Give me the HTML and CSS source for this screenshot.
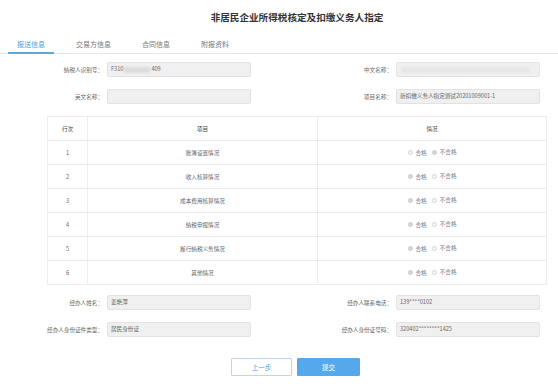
FILE: index.html
```html
<!DOCTYPE html>
<html lang="zh-CN">
<head>
<meta charset="utf-8">
<link rel="stylesheet" href="styles.css">
</head>
<body>
<div class="page">
  <h1 class="title">非居民企业所得税核定及扣缴义务人指定</h1>
  <div class="tabs">
    <div class="tab active">报送信息</div>
    <div class="tab">交易方信息</div>
    <div class="tab">合同信息</div>
    <div class="tab">附报资料</div>
  </div>
  <div class="content">
    <div class="form-grid top-form">
      <div class="field"><span class="label">纳税人识别号：</span><div class="input">F310<span class="mask mask-short"></span>409</div></div>
      <div class="field"><span class="label">中文名称：</span><div class="input"><span class="mask mask-long"></span></div></div>
      <div class="field"><span class="label">英文名称：</span><div class="input"></div></div>
      <div class="field"><span class="label">项目名称：</span><div class="input">新扣缴义务人指定测试20201009001-1</div></div>
    </div>
    <table class="grid">
      <thead>
        <tr><th class="c1">行次</th><th class="c2">项目</th><th class="c3">情况</th></tr>
      </thead>
      <tbody>
        <tr><td>1</td><td>账簿设置情况</td><td><span class="radio"></span><span class="rtext">合格</span><span class="radio on"></span><span class="rtext">不合格</span></td></tr>
        <tr><td>2</td><td>收入核算情况</td><td><span class="radio on"></span><span class="rtext">合格</span><span class="radio"></span><span class="rtext">不合格</span></td></tr>
        <tr><td>3</td><td>成本费用核算情况</td><td><span class="radio on"></span><span class="rtext">合格</span><span class="radio"></span><span class="rtext">不合格</span></td></tr>
        <tr><td>4</td><td>纳税申报情况</td><td><span class="radio on"></span><span class="rtext">合格</span><span class="radio"></span><span class="rtext">不合格</span></td></tr>
        <tr><td>5</td><td>履行纳税义务情况</td><td><span class="radio on"></span><span class="rtext">合格</span><span class="radio"></span><span class="rtext">不合格</span></td></tr>
        <tr><td>6</td><td>其他情况</td><td><span class="radio on"></span><span class="rtext">合格</span><span class="radio"></span><span class="rtext">不合格</span></td></tr>
      </tbody>
    </table>
    <div class="form-grid bottom-form">
      <div class="field"><span class="label">经办人姓名：</span><div class="input">姜艳萍</div></div>
      <div class="field"><span class="label">经办人联系电话：</span><div class="input">139****0102</div></div>
      <div class="field"><span class="label">经办人身份证件类型：</span><div class="input">居民身份证</div></div>
      <div class="field"><span class="label">经办人身份证号码：</span><div class="input">320402********1425</div></div>
    </div>
    <div class="actions">
      <button class="btn btn-prev">上一步</button>
      <button class="btn btn-submit">提交</button>
    </div>
  </div>
</div>
</body>
</html>
```

FILE: styles.css
```css
html, body {
  margin: 0;
  padding: 0;
  background: #ffffff;
}
body {
  font-family: "Noto Sans CJK SC", "Noto Sans", "Liberation Sans", sans-serif;
  color: #555;
}
.page {
  width: 558px;
  height: 384px;
  overflow: hidden;
}
.title {
  margin: 0;
  padding-top: 11px;
  padding-left: 36px;
  font-size: 9.6px;
  line-height: 12px;
  font-weight: 600;
  color: #333;
  text-align: center;
}
.tabs {
  margin-top: 14px;
  display: flex;
  gap: 13px;
  padding-left: 8px;
  border-bottom: 1px solid #e6e6e6;
}
.tab {
  padding: 0 9px;
  font-size: 7px;
  line-height: 15px;
  color: #777;
  border-bottom: 2px solid transparent;
  margin-bottom: -1px;
}
.tab.active {
  color: #4aa0de;
  border-bottom-color: #5aa8e0;
}
.content {
  padding: 0 12px 0 45px;
}
.form-grid {
  display: grid;
  grid-template-columns: 206px 206px;
  column-gap: 83px;
  row-gap: 12px;
}
.top-form {
  margin-top: 8px;
}
.bottom-form {
  margin-top: 10px;
}
.field {
  display: flex;
  align-items: center;
  gap: 4px;
}
.label {
  width: 58px;
  text-align: right;
  font-size: 5.6px;
  color: #666;
  white-space: nowrap;
}
.input {
  width: 144px;
  height: 15px;
  box-sizing: border-box;
  background: #f0f0f0;
  border: 1px solid #e2e2e2;
  border-radius: 2px;
  font-size: 5.6px;
  line-height: 13px;
  padding-left: 3px;
  color: #666;
  display: flex;
  align-items: center;
  white-space: nowrap;
}
.mask {
  display: inline-block;
  height: 6px;
  background: #dcdcdc;
  filter: blur(1px);
}
.mask-short {
  width: 26px;
  margin: 0 1px;
}
.mask-long {
  width: 128px;
  margin-left: 2px;
  background: #e6e6e6;
}
.grid {
  margin-top: 12px;
  margin-left: 2px;
  width: 500px;
  border-collapse: collapse;
  table-layout: fixed;
}
.grid th, .grid td {
  border: 1px solid #ececec;
  height: 23px;
  padding: 0;
  text-align: center;
  font-size: 5.6px;
  font-weight: normal;
  color: #666;
  white-space: nowrap;
}
.grid th {
  color: #444;
}
.c1 { width: 39px; }
.c2 { width: 229px; }
.radio {
  display: inline-block;
  width: 5px;
  height: 5px;
  box-sizing: border-box;
  border: 1px solid #d6d6d6;
  border-radius: 50%;
  background: #f4f4f4;
  vertical-align: middle;
  position: relative;
  margin-right: 3px;
}
.radio.on {
  background: #d4d4d4;
  border-color: #cfcfcf;
}
.rtext {
  vertical-align: middle;
  margin-right: 5px;
  color: #777;
}
.rtext:last-child {
  margin-right: 0;
}
.actions {
  margin-top: 21px;
  display: flex;
  justify-content: center;
  gap: 5px;
  padding-right: 0;
}
.btn {
  width: 61px;
  height: 18px;
  box-sizing: border-box;
  font-family: inherit;
  font-size: 6.5px;
  border-radius: 1px;
  padding: 0;
  cursor: pointer;
}
.btn-prev {
  background: #fff;
  border: 1px solid #b9d7f0;
  color: #4aa0de;
}
.btn-submit {
  width: 63px;
  background: #56a8ec;
  border: 1px solid #56a8ec;
  color: #fff;
}
```
